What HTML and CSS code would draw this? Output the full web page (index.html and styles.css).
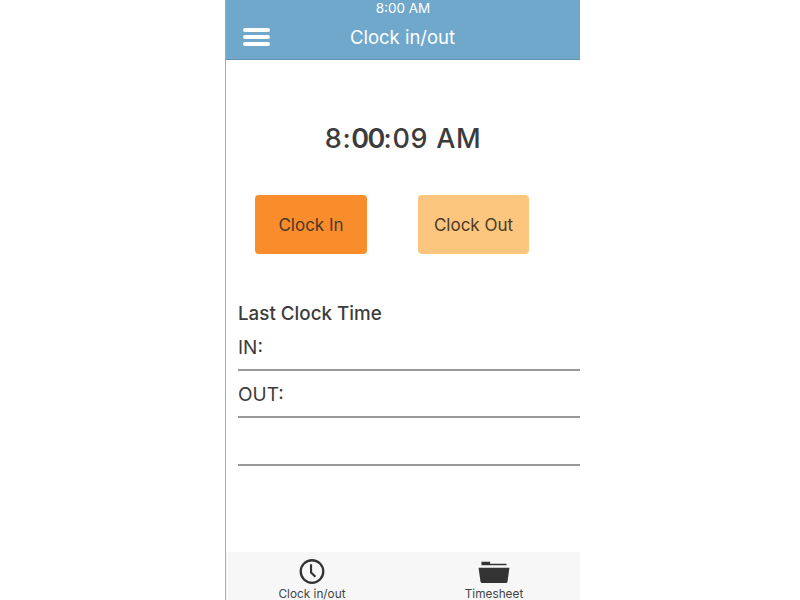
FILE: index.html
```html
<!DOCTYPE html>
<html lang="en">
<head>
    <meta charset="UTF-8">
    <title>Clock in/out</title>
    <link rel="stylesheet" href="styles.css">
</head>
<body>
    <div class="phone">
        <div class="header">
            <div class="status-time">8:00 AM</div>
            <div class="title-row">
                <div class="menu-icon"><span></span><span></span><span></span></div>
                <div class="title">Clock in/out</div>
            </div>
        </div>

        <div class="clock">8<span class="colon">:</span><span class="tight">00</span><span class="colon">:</span>09 AM</div>

        <div class="buttons">
            <button class="btn btn-in">Clock In</button>
            <button class="btn btn-out">Clock Out</button>
        </div>

        <div class="last-clock">
            <div class="last-title">Last Clock Time</div>
            <div class="line-row row-first">IN:</div>
            <div class="line-row">OUT:</div>
            <div class="line-row"></div>
        </div>

        <div class="tabs">
            <div class="tab tab-clock">
                <svg class="tab-icon" width="28" height="28" viewBox="0 0 28 28">
                    <circle cx="14" cy="14" r="11.7" fill="none" stroke="#333" stroke-width="2.4"/>
                    <path d="M13 6.5v8.5l4.5 4.5" fill="none" stroke="#333" stroke-width="2.2"/>
                </svg>
                <div class="tab-label">Clock in/out</div>
            </div>
            <div class="tab tab-sheet">
                <svg class="tab-icon" width="34" height="28" viewBox="0 0 34 28">
                    <path d="M4 4h9v2h17v1.5H4z" fill="#333"/>
                    <path d="M1 10h32l-2 14.5a2 2 0 0 1-2 1.5H5a2 2 0 0 1-2-1.5z" fill="#333"/>
                </svg>
                <div class="tab-label">Timesheet</div>
            </div>
        </div>
    </div>
</body>
</html>
```
FILE: styles.css
```css
html, body {
    height: 100%;
}
body {
    margin: 0;
    background-color: #fff;
    font-family: 'Inter', sans-serif;
    color: #3c3c3c;
    overflow: hidden;
}
.phone {
    box-sizing: border-box;
    width: 355px;
    height: 600px;
    margin-left: 225px;
    border-left: 1px solid #a8a8a8;
    display: flex;
    flex-direction: column;
}
.header {
    height: 60px;
    box-sizing: border-box;
    background-color: #6fa8cb;
    border-bottom: 1px solid #5f93b4;
    color: #fff;
}
.status-time {
    font-size: 13.5px;
    line-height: 16px;
    text-align: center;
}
.title-row {
    display: flex;
    align-items: center;
    padding: 8px 0 0 17px;
}
.menu-icon {
    display: flex;
    flex-direction: column;
    gap: 3px;
    width: 27px;
}
.menu-icon span {
    height: 4px;
    border-radius: 2px;
    background-color: #fff;
}
.title {
    flex: 1;
    font-size: 18.5px;
    line-height: 26px;
    text-align: center;
    padding-right: 45px;
}
.clock {
    margin-top: 63px;
    font-size: 27px;
    font-weight: 500;
    line-height: 32px;
    text-align: center;
    letter-spacing: 0.7px;
}
.colon {
    letter-spacing: 0.6px;
}
.tight {
    letter-spacing: -1.6px;
    font-weight: 600;
}
.buttons {
    display: flex;
    gap: 51px;
    margin-top: 40px;
    padding-left: 29px;
}
.btn {
    width: 112px;
    height: 59px;
    border: none;
    border-radius: 4px;
    font-family: inherit;
    font-size: 17px;
    color: #4a3a28;
    padding: 0;
}
.btn-in {
    background-color: #f98c2b;
}
.btn-out {
    width: 111px;
    background-color: #fdc67f;
}
.last-clock {
    margin-top: 48px;
    padding-left: 12px;
}
.last-title {
    font-size: 18.8px;
    line-height: 24px;
    font-weight: 500;
}
.line-row {
    box-sizing: border-box;
    height: 47.5px;
    border-bottom: 2px solid #989898;
    font-size: 19px;
    line-height: 24px;
    padding-top: 12px;
}
.row-first {
    height: 44.5px;
    padding-top: 10px;
}
.tabs {
    margin-top: auto;
    height: 48px;
    background-color: #f7f7f7;
    display: flex;
}
.tab {
    flex: 1;
    display: flex;
    flex-direction: column;
    align-items: center;
    padding-top: 6px;
}
.tab-clock {
    padding-right: 6px;
}
.tab-sheet {
    padding-left: 4px;
}
.tab-icon {
    display: block;
}
.tab-label {
    font-size: 11.8px;
    line-height: 12px;
    margin-top: 3px;
    color: #444;
}
```
